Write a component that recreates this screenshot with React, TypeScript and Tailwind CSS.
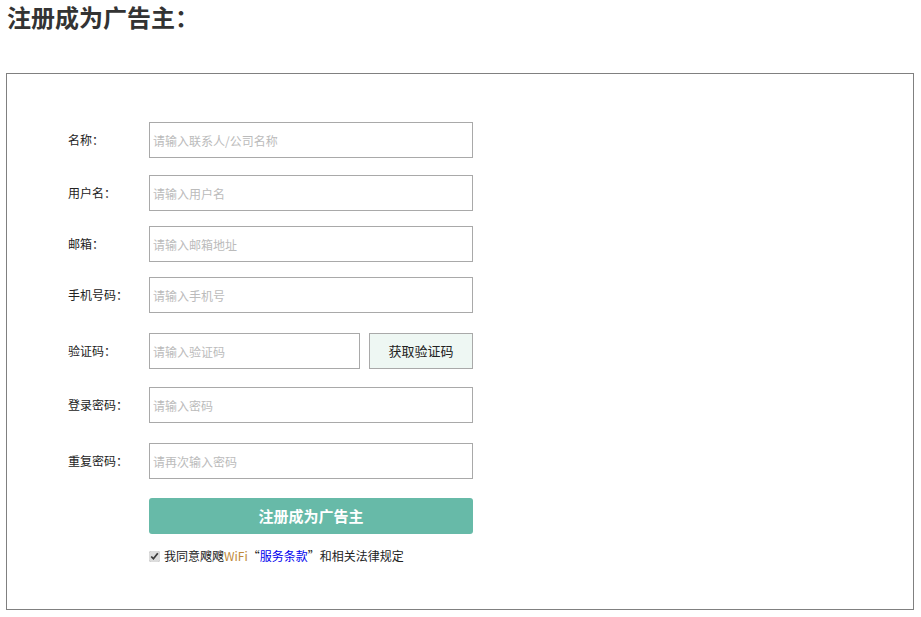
import React, { useState } from 'react';

const fields = [
  { label: '名称：', placeholder: '请输入联系人/公司名称', mt: 'mt-[48px]' },
  { label: '用户名：', placeholder: '请输入用户名', mt: 'mt-[17px]' },
  { label: '邮箱：', placeholder: '请输入邮箱地址', mt: 'mt-[15px]' },
  { label: '手机号码：', placeholder: '请输入手机号', mt: 'mt-[15px]' },
];

const Row: React.FC<{ label: string; className?: string; children: React.ReactNode }> = ({ label, className, children }) => (
  <div className={`flex items-center ${className ?? ''}`}>
    <label className="w-[81px] pl-[61px] box-content text-[12px] text-[#222] whitespace-nowrap">{label}</label>
    {children}
  </div>
);

const inputCls =
  'h-[36px] border border-[#a9a9a9] px-[3px] text-[12px] text-[#333] placeholder-[#bbb] outline-none bg-white';

export default function App() {
  const [agree, setAgree] = useState(true);

  return (
    <div className="min-h-[617px] bg-white font-['Noto_Sans_CJK_SC',sans-serif] text-[#222]">
      <h1 className="pl-[7px] pt-[4px] h-[73px] text-[24px] leading-[30px] font-bold text-[#333] font-['Liberation_Serif','Noto_Sans_CJK_SC',serif]">
        注册成为广告主：
      </h1>
      <div className="mx-[6px] w-[908px] h-[537px] border border-[#808080]">
        {fields.map((f) => (
          <Row key={f.label} label={f.label} className={f.mt}>
            <input className={`${inputCls} w-[324px]`} placeholder={f.placeholder} />
          </Row>
        ))}
        <Row label="验证码：" className="mt-[20px]">
          <input className={`${inputCls} w-[211px]`} placeholder="请输入验证码" />
          <button className="ml-[9px] w-[104px] h-[36px] border border-[#a9a9a9] bg-[#eef7f3] text-[13px] text-[#222]">
            获取验证码
          </button>
        </Row>
        <Row label="登录密码：" className="mt-[18px]">
          <input type="password" className={`${inputCls} w-[324px]`} placeholder="请输入密码" />
        </Row>
        <Row label="重复密码：" className="mt-[20px]">
          <input type="password" className={`${inputCls} w-[324px]`} placeholder="请再次输入密码" />
        </Row>
        <div className="ml-[142px] mt-[19px]">
          <button className="w-[324px] h-[36px] rounded-[3px] bg-[#67baa8] text-white text-[15px] font-bold">
            注册成为广告主
          </button>
          <div className="mt-[13px] flex items-center text-[12px] text-[#222]">
            <input
              type="checkbox"
              checked={agree}
              onChange={(e) => setAgree(e.target.checked)}
              className="w-[11px] h-[11px] mr-[4px] accent-[#dcdcdc]"
            />
            <span>我同意飕飕</span>
            <span className="text-[#c08a3a]">WiFi</span>
            <span>“</span>
            <a href="#" className="text-[#0000ee]">服务条款</a>
            <span>”和相关法律规定</span>
          </div>
        </div>
      </div>
    </div>
  );
}
